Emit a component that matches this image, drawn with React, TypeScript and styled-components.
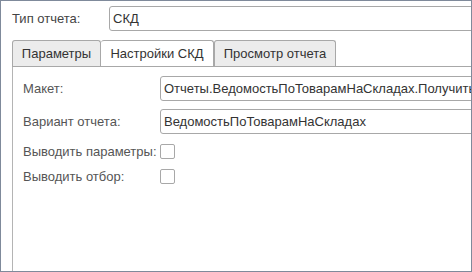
import React from "react";
import styled, { createGlobalStyle } from "styled-components";

const Global = createGlobalStyle`
  html, body { margin: 0; padding: 0; background: #ffffff; }
  body { font-family: "Liberation Sans", Arial, sans-serif; font-size: 13px; }
  * { box-sizing: border-box; }
`;

const Frame = styled.div`
  width: 472px;
  height: 272px;
  border: 1px solid #7f8a9b;
  background: #ffffff;
  overflow: hidden;
  padding: 5px 0 0 11px;
  display: flex;
  flex-direction: column;
`;

const TopRow = styled.div`
  display: flex;
  align-items: center;
  height: 25px;
`;

const TopLabel = styled.div`
  width: 97px;
  flex: none;
  color: #444444;
  white-space: nowrap;
`;

const TextBox = styled.div`
  flex: 1;
  height: 25px;
  margin-right: -12px;
  border: 1px solid #a8a8a8;
  border-radius: 3px;
  padding: 0 3px;
  display: flex;
  align-items: center;
  color: #333333;
  white-space: nowrap;
  overflow: hidden;
  background: #ffffff;
`;

const TabBar = styled.div`
  display: flex;
  align-items: flex-end;
  margin-top: 9px;
  height: 27px;
  border-bottom: 1px solid #a8a8a8;
  margin-right: -2px;
`;

const Tab = styled.div<{ $active?: boolean; $w: number }>`
  width: ${(p) => p.$w}px;
  height: 26px;
  flex: none;
  display: flex;
  align-items: center;
  justify-content: center;
  border: 1px solid #a8a8a8;
  border-bottom: none;
  border-left: ${(p) => (p.$active ? "none" : "1px solid #a8a8a8")};
  border-radius: 3px 3px 0 0;
  background: ${(p) => (p.$active ? "#ffffff" : "#ececec")};
  color: #333333;
  white-space: nowrap;
`;

const Panel = styled.div`
  flex: 1;
  border-left: 1px solid #b4b4b4;
  padding: 9px 0 0 10px;
  display: flex;
  flex-direction: column;
`;

const FieldRow = styled.div<{ $h: number; $mt?: number }>`
  display: flex;
  align-items: center;
  height: ${(p) => p.$h}px;
  margin-top: ${(p) => p.$mt ?? 0}px;
`;

const FieldLabel = styled.div`
  width: 137px;
  flex: none;
  color: #555555;
  white-space: nowrap;
`;

const Check = styled.div`
  width: 15px;
  height: 15px;
  border: 1px solid #a8a8a8;
  border-radius: 2px;
  background: #ffffff;
`;

export default function App() {
  return (
    <>
      <Global />
      <Frame>
        <TopRow>
          <TopLabel>Тип отчета:</TopLabel>
          <TextBox>СКД</TextBox>
        </TopRow>
        <TabBar>
          <Tab $w={89}>Параметры</Tab>
          <Tab $w={113} $active>
            Настройки СКД
          </Tab>
          <Tab $w={122}>Просмотр отчета</Tab>
        </TabBar>
        <Panel>
          <FieldRow $h={25}>
            <FieldLabel>Макет:</FieldLabel>
            <TextBox>Отчеты.ВедомостьПоТоварамНаСкладах.ПолучитьМакет</TextBox>
          </FieldRow>
          <FieldRow $h={25} $mt={8}>
            <FieldLabel>Вариант отчета:</FieldLabel>
            <TextBox>ВедомостьПоТоварамНаСкладах</TextBox>
          </FieldRow>
          <FieldRow $h={25} $mt={5}>
            <FieldLabel>Выводить параметры:</FieldLabel>
            <Check />
          </FieldRow>
          <FieldRow $h={25}>
            <FieldLabel>Выводить отбор:</FieldLabel>
            <Check />
          </FieldRow>
        </Panel>
      </Frame>
    </>
  );
}
